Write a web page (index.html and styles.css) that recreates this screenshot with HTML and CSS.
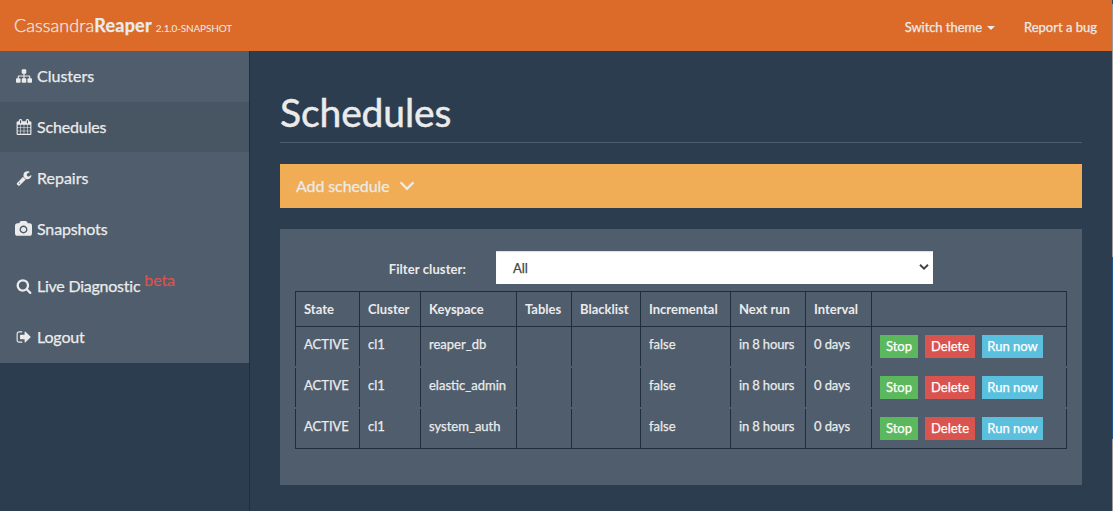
FILE: index.html
```html
<!DOCTYPE html>
<html lang="en">
<head>
<meta charset="utf-8">
<title>Cassandra Reaper - Schedules</title>
<link rel="stylesheet" href="styles.css">
</head>
<body>
<div class="window">
<div class="app">
<header class="navbar">
  <a class="brand"><span class="brand-light">Cassandra</span><b class="brand-bold">Reaper</b><small class="version">2.1.0-SNAPSHOT</small></a>
  <nav class="top-links"><a class="theme"><span class="theme-text">Switch theme</span><i class="caret"></i></a><a><span class="bug">Report a bug</span></a></nav>
</header>
<div class="main">
  <aside class="sidebar">
    <ul class="menu">
      <li class="item"><svg class="icon" viewBox="0 0 1792 1792"><path d="M1792 1248v320q0 40-28 68t-68 28h-320q-40 0-68-28t-28-68v-320q0-40 28-68t68-28h96v-192h-512v192h96q40 0 68 28t28 68v320q0 40-28 68t-68 28h-320q-40 0-68-28t-28-68v-320q0-40 28-68t68-28h96v-192h-512v192h96q40 0 68 28t28 68v320q0 40-28 68t-68 28h-320q-40 0-68-28t-28-68v-320q0-40 28-68t68-28h96v-192q0-52 38-90t90-38h512v-192h-96q-40 0-68-28t-28-68v-320q0-40 28-68t68-28h320q40 0 68 28t28 68v320q0 40-28 68t-68 28h-96v192h512q52 0 90 38t38 90v192h96q40 0 68 28t28 68z"/></svg><span>Clusters</span></li>
      <li class="item active"><svg class="icon" viewBox="0 0 1792 1792"><path d="M192 1664h288v-288h-288v288zm352 0h320v-288h-320v288zm-352-352h288v-320h-288v320zm352 0h320v-320h-320v320zm-352-384h288v-288h-288v288zm736 736h320v-288h-320v288zm-384-736h320v-288h-320v288zm768 736h288v-288h-288v288zm-384-352h320v-320h-320v320zm-352-864v-288q0-13-9.5-22.5t-22.5-9.5h-64q-13 0-22.5 9.5t-9.5 22.5v288q0 13 9.5 22.5t22.5 9.5h64q13 0 22.5-9.5t9.5-22.5zm736 864h288v-320h-288v320zm-384-384h320v-288h-320v288zm384 0h288v-288h-288v288zm32-480v-288q0-13-9.5-22.5t-22.5-9.5h-64q-13 0-22.5 9.5t-9.5 22.5v288q0 13 9.5 22.5t22.5 9.5h64q13 0 22.5-9.5t9.5-22.5zm384-64v1280q0 52-38 90t-90 38h-1408q-52 0-90-38t-38-90v-1280q0-52 38-90t90-38h128v-96q0-66 47-113t113-47h64q66 0 113 47t47 113v96h384v-96q0-66 47-113t113-47h64q66 0 113 47t47 113v96h128q52 0 90 38t38 90z"/></svg><span>Schedules</span></li>
      <li class="item"><svg class="icon" viewBox="0 0 1792 1792"><path d="M448 1472q0-26-19-45t-45-19-45 19-19 45 19 45 45 19 45-19 19-45zm644-420l-682 682q-37 37-90 37-52 0-91-37l-106-108q-38-36-38-90 0-53 38-91l681-681q39 98 114.5 173.5t173.5 114.5zm634-435q0 39-23 106-47 134-164.5 217.5t-258.5 83.5q-185 0-316.5-131.5t-131.5-316.5 131.5-316.5 316.5-131.5q58 0 121.5 16.5t107.5 46.5q16 11 16 28t-16 28l-293 169v224l193 107q5-3 79-48.5t135.5-81 70.5-35.5q15 0 23.5 10t8.5 25z"/></svg><span>Repairs</span></li>
      <li class="item"><svg class="icon camera" viewBox="0 0 1920 1792"><path d="M960 672q119 0 203.5 84.5t84.5 203.5-84.5 203.5-203.5 84.5-203.5-84.5-84.5-203.5 84.5-203.5 203.5-84.5zm704-416q106 0 181 75t75 181v896q0 106-75 181t-181 75h-1408q-106 0-181-75t-75-181v-896q0-106 75-181t181-75h224l51-136q19-49 69.5-84.5t103.5-35.5h512q53 0 103.5 35.5t69.5 84.5l51 136h224zm-704 1152q185 0 316.5-131.5t131.5-316.5-131.5-316.5-316.5-131.5-316.5 131.5-131.5 316.5 131.5 316.5 316.5 131.5z"/></svg><span>Snapshots</span></li>
      <li class="item live"><svg class="icon" viewBox="0 0 1792 1792"><path d="M1216 832q0-185-131.5-316.5t-316.5-131.5-316.5 131.5-131.5 316.5 131.5 316.5 316.5 131.5 316.5-131.5 131.5-316.5zm512 832q0 52-38 90t-90 38q-54 0-90-38l-343-342q-179 124-399 124-143 0-273.5-55.5t-225-150-150-225-55.5-273.5 55.5-273.5 150-225 225-150 273.5-55.5 273.5 55.5 225 150 150 225 55.5 273.5q0 220-124 399l343 343q37 37 37 90z"/></svg><span class="live-text">Live Diagnostic</span><span class="beta">beta</span></li>
      <li class="item"><svg class="icon" viewBox="0 0 1792 1792"><path d="M704 1440q0 4 1 20t.5 26.5-3 23.5-10 19.5-20.5 6.5h-320q-119 0-203.5-84.5t-84.5-203.5v-704q0-119 84.5-203.5t203.5-84.5h320q13 0 22.5 9.5t9.5 22.5q0 4 1 20t.5 26.5-3 23.5-10 19.5-20.5 6.5h-320q-66 0-113 47t-47 113v704q0 66 47 113t113 47h312l11.5 1 11.5 3 8 5.5 7 9 2 13.5zm928-544q0 26-19 45l-544 544q-19 19-45 19t-45-19-19-45v-288h-448q-26 0-45-19t-19-45v-384q0-26 19-45t45-19h448v-288q0-26 19-45t45-19 45 19l544 544q19 19 19 45z"/></svg><span>Logout</span></li>
    </ul>
  </aside>
  <main class="content">
    <h1 class="title"><span>Schedules</span></h1>
    <div class="add"><span>Add schedule</span><svg class="chevron" viewBox="0 0 16 12"><path d="M1.5 2.2 8 8.8l6.5-6.6"/></svg></div>
    <section class="panel">
      <div class="filter"><label class="filter-label"><span>Filter cluster:</span></label><div class="select"><span>All</span><svg class="arrow" viewBox="0 0 10 8"><path d="m1 1.8 4 3.8 4-3.8"/></svg></div></div>
      <div class="table">
        <div class="row head"><b><span>State</span></b><b><span>Cluster</span></b><b><span>Keyspace</span></b><b><span>Tables</span></b><b><span>Blacklist</span></b><b><span>Incremental</span></b><b><span>Next run</span></b><b><span>Interval</span></b><b></b></div>
        <div class="row"><div>ACTIVE</div><div>cl1</div><div>reaper_db</div><div></div><div></div><div>false</div><div class="next">in 8 hours</div><div class="days">0 days</div><div class="actions"><a class="btn stop">Stop</a><a class="btn delete">Delete</a><a class="btn run">Run now</a></div></div>
        <div class="row"><div>ACTIVE</div><div>cl1</div><div>elastic_admin</div><div></div><div></div><div>false</div><div class="next">in 8 hours</div><div class="days">0 days</div><div class="actions"><a class="btn stop">Stop</a><a class="btn delete">Delete</a><a class="btn run">Run now</a></div></div>
        <div class="row last"><div>ACTIVE</div><div>cl1</div><div>system_auth</div><div></div><div></div><div>false</div><div class="next">in 8 hours</div><div class="days">0 days</div><div class="actions"><a class="btn stop">Stop</a><a class="btn delete">Delete</a><a class="btn run">Run now</a></div></div>
      </div>
    </section>
  </main>
</div>
</div>
<div class="edge"></div>
</div>
</body>
</html>
```
FILE: styles.css
```css
* { box-sizing: border-box; }
body { margin: 0; font-family: Lato, sans-serif; font-size: 13px; color: #ebebeb; background: #2c3d4f; overflow: hidden; -webkit-text-stroke: 0.25px currentColor; }
.window { display: flex; height: 511px; }
.app { flex: 1; display: flex; flex-direction: column; }
.edge { width: 1px; background: linear-gradient(#24506a 0 4px, #999 4px 257px, #1d558c 257px 439px, #999 439px); }
.navbar { height: 51px; background: #dc6a28; display: flex; justify-content: space-between; align-items: center; padding: 0 15px 0 14px; }
.brand { display: flex; align-items: baseline; font-size: 18px; line-height: 24px; padding-top: 2px; }
.brand-light { font-weight: 300; letter-spacing: 0.08px; }
.brand-bold { font-weight: 700; letter-spacing: 0.2px; }
.version { font-size: 10px; margin-left: 4px; letter-spacing: -0.15px; -webkit-text-stroke: 0; }
.top-links { display: flex; gap: 29px; line-height: 20px; padding-top: 2px; }
.theme { display: flex; align-items: center; }
.theme-text { letter-spacing: -0.05px; }
.caret { margin: 2px 0 0 5px; border: 4px solid transparent; border-top-color: #ebebeb; border-bottom: 0; }
.main { flex: 1; display: flex; }
.sidebar { width: 250px; border-right: 1px solid #202d3b; }
.menu { list-style: none; margin: 0; padding: 0; background: #4f5d6c; height: 312px; }
.item { display: flex; align-items: center; height: 50px; margin-bottom: 1px; padding-left: 16px; font-size: 16px; line-height: 22px; letter-spacing: -0.15px; }
.item:first-child, .item:nth-child(3) { letter-spacing: 0; }
.active { background: #485563; }
.live { height: 56px; padding-top: 6px; }
.live-text { letter-spacing: -0.24px; }
.icon { width: 16px; height: 16px; margin-right: 5px; fill: #ebebeb; }
.camera { width: 17px; margin-left: -1px; }
.beta { color: #d9534f; margin: -13px 0 0 4px; letter-spacing: -0.1px; }
.content { flex: 1; padding: 0 30px; }
.title { margin: 0 0 21px; height: 92px; padding-top: 37px; border-bottom: 1px solid #4e5d6c; font-size: 39px; line-height: 48px; font-weight: 400; letter-spacing: -0.1px; -webkit-text-stroke-width: 0.5px; }
.add { height: 44px; background: #f0ad56; display: flex; align-items: center; padding: 0 0 1px 16px; font-size: 16px; letter-spacing: -0.1px; }
.chevron { width: 16px; height: 12px; margin-left: 9px; fill: none; stroke: #ebebeb; stroke-width: 2.3; }
.panel { margin-top: 21px; height: 256px; background: #4f5d6c; padding: 22px 15px; }
.filter { display: flex; height: 33px; margin-bottom: 7px; }
.filter-label { width: 201px; padding-right: 30px; text-align: right; font-weight: 700; line-height: 36px; letter-spacing: 0.1px; -webkit-text-stroke: 0; }
.select { width: 437px; background: #fff; box-shadow: inset 0 1px 1px #ddd; color: #444; display: flex; align-items: center; justify-content: space-between; padding: 0 4px 0 17px; }
.arrow { width: 10px; height: 8px; margin-bottom: 1px; fill: none; stroke: #444; stroke-width: 2; }
.row { display: grid; grid-template-columns: 64px 61px 96px 55px 69px 90px 75px 66px 196px; height: 39px; margin-bottom: 2px; line-height: 18px; }
.row > * { border-left: 1px solid #202d3b; padding: 8px 0 0 8px; white-space: nowrap; }
.row > :last-child { border-right: 1px solid #202d3b; }
.row > .next { letter-spacing: -0.15px; }
.row > .days { letter-spacing: -0.1px; }
.head { height: 36px; margin: 0; border: solid #202d3b; border-width: 1px 0; -webkit-text-stroke: 0; }
.last { height: 40px; border-bottom: 1px solid #202d3b; }
.row > .actions { display: flex; gap: 7px; }
.btn { height: 23px; line-height: 22px; color: #fff; text-align: center; }
.stop { width: 38px; background: #5cb85c; }
.delete { width: 50px; background: #d9534f; }
.run { width: 61px; background: #5bc0de; }
```
